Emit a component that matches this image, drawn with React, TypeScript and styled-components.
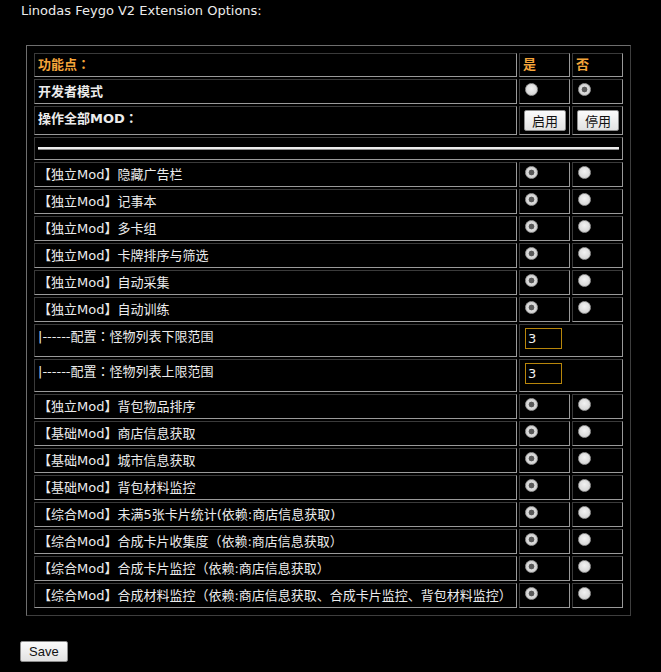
import React, { useState } from "react";
import styled, { createGlobalStyle } from "styled-components";

const GlobalStyle = createGlobalStyle`
  body {
    margin: 0;
    background: #000;
    color: #ececec;
    font-family: "DejaVu Sans", "Noto Sans CJK SC", sans-serif;
    font-size: 13px;
  }
`;

type Row =
  | { kind: "mod"; label: string; on: boolean }
  | { kind: "config"; label: string; value: string };

const rows: Row[] = [
  { kind: "mod", label: "【独立Mod】隐藏广告栏", on: true },
  { kind: "mod", label: "【独立Mod】记事本", on: true },
  { kind: "mod", label: "【独立Mod】多卡组", on: true },
  { kind: "mod", label: "【独立Mod】卡牌排序与筛选", on: true },
  { kind: "mod", label: "【独立Mod】自动采集", on: true },
  { kind: "mod", label: "【独立Mod】自动训练", on: true },
  { kind: "config", label: "|------配置：怪物列表下限范围", value: "3" },
  { kind: "config", label: "|------配置：怪物列表上限范围", value: "3" },
  { kind: "mod", label: "【独立Mod】背包物品排序", on: true },
  { kind: "mod", label: "【基础Mod】商店信息获取", on: true },
  { kind: "mod", label: "【基础Mod】城市信息获取", on: true },
  { kind: "mod", label: "【基础Mod】背包材料监控", on: true },
  { kind: "mod", label: "【综合Mod】未满5张卡片统计(依赖:商店信息获取)", on: true },
  { kind: "mod", label: "【综合Mod】合成卡片收集度（依赖:商店信息获取）", on: true },
  { kind: "mod", label: "【综合Mod】合成卡片监控（依赖:商店信息获取）", on: true },
  {
    kind: "mod",
    label: "【综合Mod】合成材料监控（依赖:商店信息获取、合成卡片监控、背包材料监控）",
    on: true,
  },
];

const Page = styled.div`
  padding: 2px 0 0 21px;
`;

const Title = styled.div`
  line-height: 17px;
`;

const OptionsBox = styled.div`
  box-sizing: border-box;
  width: 605px;
  margin: 26px 0 0 5px;
  padding: 5px;
  border: 1px solid;
  border-color: #6e6e6e #3e3e3e #3e3e3e #6e6e6e;
`;

const Table = styled.table`
  width: 100%;
  table-layout: fixed;
  border-collapse: separate;
  border-spacing: 2px;
`;

const Cell = styled.td<{ $narrow?: boolean }>`
  padding: 3px;
  border: 1px solid;
  border-color: #3a3a3a #9a9a9a #9a9a9a #3a3a3a;
  vertical-align: top;
  line-height: 17px;
  white-space: nowrap;
  ${(p) => (p.$narrow ? "width: 43px;" : "")}
`;

const HeadCell = styled(Cell).attrs({ as: "th" })`
  text-align: left;
  color: #f5a53a;
  font-weight: bold;
  line-height: 16px;
`;

const Strong = styled.span`
  font-weight: bold;
`;

// full-width colon drawn centred, as in the traditional glyph
const Colon = styled.span`
  font-family: "Noto Sans CJK TC", sans-serif;
  line-height: 0;
`;

const Radio = styled.input.attrs({ type: "radio" })`
  appearance: none;
  display: block;
  box-sizing: border-box;
  width: 13px;
  height: 13px;
  margin: 0 0 0 2px;
  border-radius: 50%;
  border: 1px solid #9c9c9c;
  background: radial-gradient(circle at 50% 40%, #f2f2f2, #cdcdcd);
  &:checked {
    background: radial-gradient(circle, #5a5a5a 0 2.6px, #dcdcdc 3.2px, #c9c9c9);
  }
`;

const ToggleButton = styled.button`
  display: block;
  height: 21px;
  margin-left: 1px;
  padding: 0 7px;
  border: 1px solid #8c8c8c;
  border-radius: 2px;
  background: linear-gradient(#fbfbfb, #e2e2e2);
  color: #111;
  font-family: "Noto Sans CJK SC", sans-serif;
  font-size: 13px;
  line-height: 19px;
`;

const Divider = styled.div`
  margin: 6px 0;
  height: 0;
  border-top: 2px solid #ececec;
  border-bottom: 1px solid #8a8a8a;
`;

const NumberInput = styled.input`
  display: block;
  box-sizing: border-box;
  width: 37px;
  height: 21px;
  margin: 0 0 4px 2px;
  padding: 0 2px;
  border: 1px solid #b8860b;
  background: #000;
  color: #f2f2f2;
  font-family: "DejaVu Sans", sans-serif;
  font-size: 13px;
  outline: none;
`;

const SaveButton = styled.button`
  margin: 25px 0 0 -1px;
  height: 21px;
  padding: 0 8px;
  border: 1px solid #8c8c8c;
  border-radius: 2px;
  background: linear-gradient(#fbfbfb, #e2e2e2);
  color: #111;
  font-family: "Liberation Sans", Arial, sans-serif;
  font-size: 13px;
`;

const Label = ({ text }: { text: string }) => {
  const parts = text.split("：");
  return (
    <>
      {parts.map((p, i) => (
        <React.Fragment key={i}>
          {i > 0 && <Colon>：</Colon>}
          {p}
        </React.Fragment>
      ))}
    </>
  );
};

const App = () => {
  const [devMode, setDevMode] = useState(false);
  const [mods, setMods] = useState<boolean[]>(rows.map((r) => (r.kind === "mod" ? r.on : false)));

  const setMod = (i: number, v: boolean) => {
    setMods((prev) => prev.map((m, j) => (j === i ? v : m)));
  };

  return (
    <Page>
      <GlobalStyle />
      <Title>Linodas Feygo V2 Extension Options:</Title>
      <OptionsBox>
        <Table>
          <tbody>
            <tr>
              <HeadCell>
                <Label text="功能点：" />
              </HeadCell>
              <HeadCell $narrow>是</HeadCell>
              <HeadCell $narrow>否</HeadCell>
            </tr>
            <tr>
              <Cell>
                <Strong>开发者模式</Strong>
              </Cell>
              <Cell>
                <Radio name="dev" checked={devMode} onChange={() => setDevMode(true)} />
              </Cell>
              <Cell>
                <Radio name="dev" checked={!devMode} onChange={() => setDevMode(false)} />
              </Cell>
            </tr>
            <tr>
              <Cell>
                <Strong>
                  <Label text="操作全部MOD：" />
                </Strong>
              </Cell>
              <Cell>
                <ToggleButton onClick={() => setMods(mods.map(() => true))}>启用</ToggleButton>
              </Cell>
              <Cell>
                <ToggleButton onClick={() => setMods(mods.map(() => false))}>停用</ToggleButton>
              </Cell>
            </tr>
            <tr>
              <Cell colSpan={3}>
                <Divider />
              </Cell>
            </tr>
            {rows.map((row, i) =>
              row.kind === "config" ? (
                <tr key={i}>
                  <Cell>
                    <Label text={row.label} />
                  </Cell>
                  <Cell colSpan={2}>
                    <NumberInput defaultValue={row.value} />
                  </Cell>
                </tr>
              ) : (
                <tr key={i}>
                  <Cell>{row.label}</Cell>
                  <Cell>
                    <Radio name={"mod" + i} checked={mods[i]} onChange={() => setMod(i, true)} />
                  </Cell>
                  <Cell>
                    <Radio name={"mod" + i} checked={!mods[i]} onChange={() => setMod(i, false)} />
                  </Cell>
                </tr>
              )
            )}
          </tbody>
        </Table>
      </OptionsBox>
      <SaveButton>Save</SaveButton>
    </Page>
  );
};

export default App;
